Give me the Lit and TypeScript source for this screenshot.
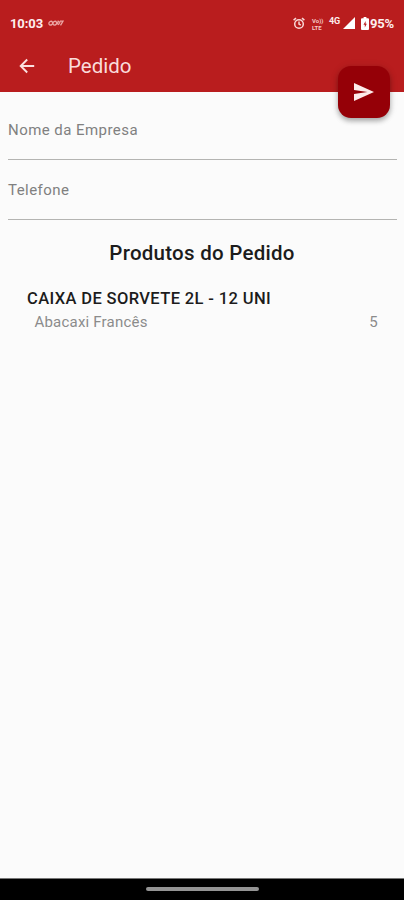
import { LitElement, html, css } from "lit";
import { customElement, property } from "lit/decorators.js";

@customElement("status-bar")
class StatusBar extends LitElement {
  static styles = css`
    :host { display: flex; align-items: center; height: 46px; padding: 0 9px 0 10px; color: #fdeeee; font-weight: 700; font-size: 13px; line-height: 16px; }
    .time { width: 33px; letter-spacing: -0.1px; padding-top: 1px; }
    .carrier { margin-left: 5px; }
    .grow { flex: 1; }
    svg { display: block; flex: none; }
    .alarm { margin-right: 7px; }
    .volte { display: flex; flex-direction: column; width: 13px; font-size: 6px; line-height: 7px; font-weight: 700; margin: 1px 4px 0 0; color: #f5c9c7; white-space: nowrap; }
    .net { width: 12px; font-size: 9px; line-height: 8px; margin: -4px 2px 0 0; letter-spacing: -0.2px; }
    .signal { margin-right: 6px; }
    .battery { margin-right: 1px; }
    .percent { width: 25px; letter-spacing: -0.2px; white-space: nowrap; padding-top: 1px; }
  `;
  render() {
    return html`
      <span class="time">10:03</span>
      <svg class="carrier" width="16" height="8" viewBox="0 0 16 8" fill="none" stroke="#eba5a3" stroke-width="1.3">
        <ellipse cx="2.8" cy="4.2" rx="2" ry="1.7" transform="rotate(-35 2.8 4.2)" />
        <ellipse cx="6.8" cy="4.2" rx="2" ry="1.7" transform="rotate(-35 6.8 4.2)" />
        <path d="M9 5.5l1.2-3.2 1.6 1L10.3 6M12 2.2h3L12.5 6.3" />
      </svg>
      <span class="grow"></span>
      <svg class="alarm" width="12" height="13" viewBox="0 0 12 13" fill="none" stroke="#f9d9d8" stroke-width="1.5">
        <circle cx="6" cy="7" r="4.3" /><path d="M6 4.5V7l1.8 1.2M.6 3.1L3 1.2M11.4 3.1L9 1.2" />
      </svg>
      <span class="volte"><span>Vo))</span><span>LTE</span></span>
      <span class="net">4G</span>
      <svg class="signal" width="12" height="12" viewBox="0 0 12 12"><path fill="#fff" d="M12 0v12H0z" /></svg>
      <svg class="battery" width="8" height="13" viewBox="0 0 8 13">
        <path fill="#fff" fill-rule="evenodd" d="M2.6 0h2.8v1.3H7q1 0 1 1V12q0 1-1 1H1q-1 0-1-1V2.3q0-1 1-1h1.6zM4.6 4L2.5 7.7h1.3V10.5l2-3.8H4.6z" />
      </svg>
      <span class="percent">95%</span>
    `;
  }
}

@customElement("form-field")
class FormField extends LitElement {
  @property() label = "";
  static styles = css`
    :host { display: block; height: 59px; margin: 0 7px 0 8px; border-bottom: 1px solid #b4b4b2; color: #808080; font-size: 15px; line-height: 20px; letter-spacing: 0.45px; }
    .label { padding: 20px 0 0; }
  `;
  render() {
    return html`<div class="label">${this.label}</div>`;
  }
}

@customElement("app-root")
class AppRoot extends LitElement {
  static styles = css`
    :host { display: flex; flex-direction: column; height: 900px; background: #fbfbfb; font-family: Roboto, sans-serif; overflow: hidden; }
    .header { position: relative; height: 92px; background: #b91d1e; flex: none; }
    .bar { display: flex; align-items: center; height: 40px; padding-left: 19px; color: #f9dcdb; }
    .bar svg { display: block; }
    .title { margin: 0 0 0 33px; font-size: 20.5px; line-height: 24px; font-weight: 400; letter-spacing: 0; }
    .send { position: absolute; right: 14px; top: 66px; width: 52px; height: 52px; padding: 0; border: 0; border-radius: 13px; background: #950007; display: flex; align-items: center; justify-content: center; box-shadow: 0 3px 5px rgba(0, 0, 0, 0.28), 0 1px 8px rgba(0, 0, 0, 0.12); }
    .content { flex: 1; padding-top: 8px; }
    .heading { margin: 21px 0 0; text-align: center; font-size: 20.5px; line-height: 24px; font-weight: 500; color: #1c1c1c; letter-spacing: 0.26px; }
    .product { margin: 24px 26px 0 27px; }
    .name { font-size: 16.5px; line-height: 20px; font-weight: 500; color: #1c1c1c; letter-spacing: 0.38px; }
    .row { display: flex; justify-content: space-between; padding: 3px 0 0 7.5px; font-size: 15px; line-height: 20px; color: #8b8b8b; letter-spacing: 0.2px; }
    .nav { display: flex; align-items: center; justify-content: center; height: 21px; border-top: 1px solid #777; background: #000; flex: none; }
    .pill { width: 113px; height: 4px; margin-top: -1px; border-radius: 2px; background: #949494; }
  `;
  render() {
    return html`
      <header class="header">
        <status-bar></status-bar>
        <div class="bar">
          <svg width="16" height="16" viewBox="0 0 16 16" fill="none" stroke="#fbe0df" stroke-width="1.9"><path d="M15.2 8H2M8.2 1.5L1.7 8l6.5 6.5" /></svg>
          <h1 class="title">Pedido</h1>
        </div>
        <button class="send" aria-label="Enviar">
          <svg width="20" height="18" viewBox="0 0 20 18"><path fill="#fdebea" d="M0 0L20 9 0 18V11L13.5 9 0 7z" /></svg>
        </button>
      </header>
      <main class="content">
        <form-field label="Nome da Empresa"></form-field>
        <form-field label="Telefone"></form-field>
        <h2 class="heading">Produtos do Pedido</h2>
        <section class="product">
          <div class="name">CAIXA DE SORVETE 2L - 12 UNI</div>
          <div class="row"><span>Abacaxi Francês</span><span>5</span></div>
        </section>
      </main>
      <footer class="nav"><div class="pill"></div></footer>
    `;
  }
}
